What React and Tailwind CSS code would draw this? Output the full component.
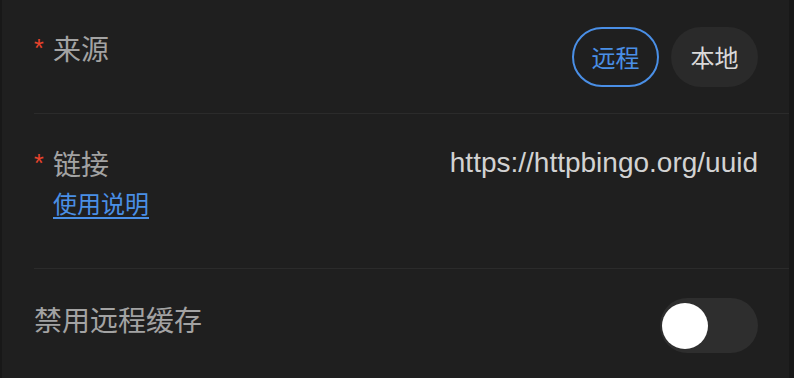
import React, { useState } from "react";

const cjk = "font-['Noto_Sans_CJK_SC',sans-serif]";

function Label({ required, children }) {
  return (
    <div className={`flex items-start text-[28px] leading-[40px] text-[#a3a3a3] ${cjk}`}>
      {required ? <span className="w-[19px] text-[25px] text-[#e8432c] font-['Liberation_Sans',sans-serif]">*</span> : null}
      <span>{children}</span>
    </div>
  );
}

export default function App() {
  const [source, setSource] = useState("remote");
  const [noCache, setNoCache] = useState(false);

  return (
    <div className="h-[378px] w-full bg-[#1f1f1f] border-l-[2px] border-r-[5px] border-[#181818] overflow-hidden">
      <div className="ml-[32px]">
        <div className="h-[114px] pt-[28px] pr-[31px] flex justify-between items-start border-b border-[#2b2b2b]">
          <Label required>来源</Label>
          <div className={`flex gap-[12px] -mt-[1px] ${cjk}`}>
            <button
              onClick={() => setSource("remote")}
              className={`h-[60px] w-[87px] rounded-full text-[24px] ${source === "remote" ? "border-2 border-[#4a8fe6] text-[#4a8fe6]" : "bg-[#2a2a2a] text-[#d9d9d9]"}`}
            >
              远程
            </button>
            <button
              onClick={() => setSource("local")}
              className={`h-[60px] w-[87px] rounded-full text-[24px] ${source === "local" ? "border-2 border-[#4a8fe6] text-[#4a8fe6]" : "bg-[#2a2a2a] text-[#d9d9d9]"}`}
            >
              本地
            </button>
          </div>
        </div>

        <div className="h-[155px] pt-[29px] pr-[31px] flex justify-between items-start border-b border-[#2b2b2b]">
          <div>
            <Label required>链接</Label>
            <a href="#" className={`block ml-[19px] mt-[4px] text-[24px] leading-[32px] text-[#4a8fe6] underline underline-offset-[4px] ${cjk}`}>使用说明</a>
          </div>
          <div className="text-[28px] leading-[40px] text-[#d2d2d2] font-['Liberation_Sans',sans-serif]">
            https://httpbingo.org/uuid
          </div>
        </div>

        <div className="pt-[29px] pr-[31px] flex justify-between items-start">
          <div className="mt-[1px]">
            <Label>禁用远程缓存</Label>
          </div>
          <button
            onClick={() => setNoCache(!noCache)}
            className={`h-[55px] w-[98px] rounded-full px-[2px] flex items-center ${noCache ? "bg-[#4a8fe6] justify-end" : "bg-[#2e2e2e] justify-start"}`}
          >
            <span className="h-[46px] w-[46px] rounded-full bg-white block" />
          </button>
        </div>
      </div>
    </div>
  );
}
